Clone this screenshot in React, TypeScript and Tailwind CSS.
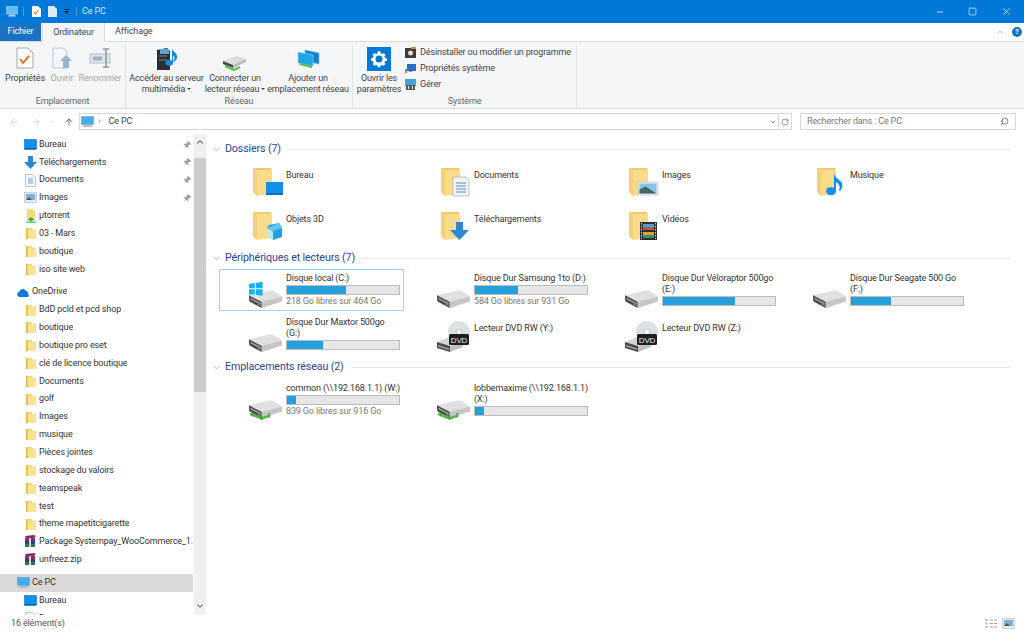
import { ReactNode } from "react";
import { ChevronDown, ChevronUp, ArrowLeft, ArrowRight, ArrowUp, Search, RotateCw, Minus, Square, X, Pin } from "lucide-react";

function SmallFolder() {
  return (
    <svg width="12" height="13" viewBox="0 0 12 13" className="shrink-0">
      <path d="M1 1h6v1.500h4V12H1z" fill="#f5d67b" />
      <path d="M1 1h1.600v11H1z" fill="#e6b94f" />
      <path d="M3 3h8v9H3z" fill="#fbe38f" />
    </svg>
  );
}

function Desktop() {
  return (
    <svg width="13" height="11" viewBox="0 0 13 11" className="shrink-0">
      <rect x="0.500" y="0.500" width="12" height="10" fill="#0f8fee" stroke="#0b6fc0" strokeWidth="0.6" />
      <rect x="1" y="9" width="11" height="1" fill="#0b5fa8" />
    </svg>
  );
}

function DownArrow() {
  return (
    <svg width="13" height="13" viewBox="0 0 13 13" className="shrink-0">
      <path d="M4 0h5v6h4l-6.500 7L0 6h4z" fill="#2b88d8" />
    </svg>
  );
}

function DocSmall() {
  return (
    <svg width="11" height="13" viewBox="0 0 11 13" className="shrink-0">
      <path d="M.5.5h7l3 3v9H.5z" fill="#f3f6f9" stroke="#a4adb5" strokeWidth="0.7" />
      <path d="M3 5h5M3 7h5M3 9h5" stroke="#4a90c8" strokeWidth="0.8" />
    </svg>
  );
}

function PicSmall() {
  return (
    <svg width="13" height="11" viewBox="0 0 13 11" className="shrink-0">
      <rect x="0.500" y="0.500" width="12" height="10" fill="#e9edf0" stroke="#aab2b9" strokeWidth="0.6" />
      <rect x="2" y="2" width="9" height="6" fill="#7fb0d8" />
      <path d="M2 8l3-3 3 3z" fill="#3c5a5e" />
    </svg>
  );
}

function Torrent() {
  return (
    <svg width="12" height="14" viewBox="0 0 12 14" className="shrink-0">
      <path d="M2 0h6v1.500h2V10H2z" fill="#f6d97f" />
      <path d="M6 8l4 3H7.500v1.500h-3V11H2z" fill="#4caf3a" />
      <rect x="1" y="12.500" width="10" height="1.200" fill="#59b548" />
    </svg>
  );
}

function Rar() {
  return (
    <svg width="13" height="13" viewBox="0 0 13 13" className="shrink-0">
      <path d="M1 1l9-1 2 1-2 2H2z" fill="#8e2a6c" />
      <rect x="1" y="3" width="10" height="3" fill="#8a2e68" />
      <rect x="1" y="6" width="10" height="3" fill="#2a3c8f" />
      <rect x="1" y="9" width="10" height="3" fill="#2c7d4a" />
      <path d="M5 3h2v9H5z" fill="#d8d2c2" />
    </svg>
  );
}

function OneDrive() {
  return (
    <svg width="13" height="9" viewBox="0 0 13 9" className="shrink-0">
      <path d="M2.500 9A2.500 2.500 0 0 1 2 4.100 3.700 3.700 0 0 1 8.500 2.500 2.900 2.900 0 0 1 11 6.200 1.500 1.500 0 0 1 11 9z" fill="#0f78d4" />
    </svg>
  );
}

function PcSmall() {
  return (
    <svg width="13" height="12" viewBox="0 0 13 12" className="shrink-0">
      <rect x="0.500" y="0.500" width="12" height="8" fill="#3fb0ee" stroke="#7f9fb4" strokeWidth="0.6" />
      <path d="M3 9h7l1.500 2h-10z" fill="#b6bec5" />
    </svg>
  );
}

function BigFolder({ children }: { children?: ReactNode }) {
  return (
    <svg width="30" height="30" viewBox="0 0 30 30" className="shrink-0">
      <path d="M0 1h18v26H3l-3-3z" fill="#f0c968" />
      <path d="M0 1l4 2h15v24L4 29 0 25z" fill="#f8dc8c" />
      <path d="M0 1l4 3v25l-4-4z" fill="#f4d077" />
      {children}
    </svg>
  );
}

function Drive({ children }: { children?: ReactNode }) {
  return (
    <svg width="33" height="18" viewBox="0 0 34 22" preserveAspectRatio="none" className="mt-[1px] shrink-0 overflow-visible">
      <path d="M0 6.500L21 .5Q23 0 25 1L34 8 13 14.500z" fill="#e0e0e0" />
      <path d="M13 14.500L34 8v6L13 22z" fill="#c6c6c6" />
      <path d="M0 6.500L13 14.500V22L1 14.500Q0 13 0 11z" fill="#4a4a4a" />
      <path d="M1.500 9.500L12 16v1.800L1.500 11.300z" fill="#a8a8a8" />
      <path d="M9 16.500l3 2v1.200l-3-2z" fill="#6fd08a" />
      {children}
    </svg>
  );
}

function NetDrive() {
  return (
    <Drive>
      <path d="M1 17l12 5.500 8-3" stroke="#58b947" strokeWidth="3" fill="none" />
      <path d="M4 15v5M13 19v5M21 16v5" stroke="#3e9c34" strokeWidth="1.500" />
    </Drive>
  );
}

function DvdDrive() {
  return (
    <svg width="34" height="32" viewBox="0 0 34 32" className="shrink-0">
      <path d="M0 21l12-5 10 4-9 5z" fill="#d4d4d4" />
      <path d="M0 21l13 4v6L0 27z" fill="#4a4a4a" />
      <path d="M13 25l13-4v5l-13 5z" fill="#c0c0c0" />
      <path d="M1 24l11 3.400V29L1 25.500z" fill="#a8a8a8" />
      <circle cx="22" cy="11" r="11" fill="#dbe2e4" />
      <circle cx="22" cy="11" r="3" fill="#f7f7f7" stroke="#a9b0b4" strokeWidth="0.6" />
      <rect x="12" y="13" width="20" height="11" fill="#1f1f1f" rx="1.500" />
      <text x="22" y="21.500" fontSize="8" fill="#e8e8e8" textAnchor="middle" fontFamily="Liberation Sans">DVD</text>
    </svg>
  );
}

const pinned = [
  { name: "Bureau", icon: <Desktop /> },
  { name: "Téléchargements", icon: <DownArrow /> },
  { name: "Documents", icon: <DocSmall /> },
  { name: "Images", icon: <PicSmall /> },
];

const quick = ["03 - Mars", "boutique", "iso site web"];
const oneDrive = [
  "BdD pcld et pcd shop",
  "boutique",
  "boutique pro eset",
  "clé de licence boutique",
  "Documents",
  "golf",
  "Images",
  "musique",
  "Pièces jointes",
  "stockage du valoirs",
  "teamspeak",
  "test",
  "theme mapetitcigarette",
];

function NavRow({ icon, name, pin, top, active }: { icon: ReactNode; name: string; pin?: boolean; top?: boolean; active?: boolean }) {
  return (
    <div className={`relative flex h-[17.85px] shrink-0 items-center gap-[2px] ${top ? "pl-[17px]" : "pl-[24px]"} ${active ? "bg-[#d9d9d9]" : ""}`}>
      <span className="flex w-[13px] justify-center">{icon}</span>
      <span className="whitespace-nowrap overflow-hidden">{name}</span>
      {pin && <Pin size={8} className="absolute right-[2px] top-[5px] rotate-45 fill-[#9a9a9a] text-[#9a9a9a]" />}
    </div>
  );
}

function Sidebar() {
  return (
    <div className="flex w-[206px] shrink-0">
      <div className="flex w-[193px] flex-col overflow-hidden pt-[1.500px] text-[#333]">
        {pinned.map((p) => (
          <NavRow key={p.name} icon={p.icon} name={p.name} pin />
        ))}
        <NavRow icon={<Torrent />} name="µtorrent" />
        {quick.map((q) => (
          <NavRow key={q} icon={<SmallFolder />} name={q} />
        ))}
        <div className="h-[5px] shrink-0" />
        <NavRow top icon={<OneDrive />} name="OneDrive" />
        {oneDrive.map((q, i) => (
          <NavRow key={i} icon={<SmallFolder />} name={q} />
        ))}
        <NavRow icon={<Rar />} name="Package Systempay_WooCommerce_1." />
        <NavRow icon={<Rar />} name="unfreez.zip" />
        <div className="h-[5px] shrink-0" />
        <NavRow top active icon={<PcSmall />} name="Ce PC" />
        <NavRow icon={<Desktop />} name="Bureau" />
        <NavRow icon={<DocSmall />} name="Documents" />
      </div>
      <div className="ml-[1px] flex w-[12px] flex-col bg-[#f0f0f0]">
        <div className="flex h-[24px] justify-center pt-[3px] text-[#555]">
          <ChevronUp size={10} strokeWidth={2.5} />
        </div>
        <div className="h-[234px] bg-[#cdcdcd]" />
        <div className="flex-1" />
        <div className="flex h-[14px] justify-center text-[#555]">
          <ChevronDown size={10} strokeWidth={2.5} />
        </div>
      </div>
    </div>
  );
}

function SectionHead({ title }: { title: string }) {
  return (
    <div className="flex h-[17px] items-center">
      <ChevronDown size={11} strokeWidth={1.2} className="ml-[5px] text-[#777]" />
      <span className="ml-[3px] whitespace-nowrap text-[10.700px] text-[#2d4593]">{title}</span>
      <div className="ml-[8px] mr-[14px] h-px flex-1 bg-[#e6e6e6]" />
    </div>
  );
}

function FolderItem({ name, children }: { name: string; children?: ReactNode }) {
  return (
    <div className="flex h-[39px] pl-[34px]">
      <BigFolder>{children}</BigFolder>
      <span className="ml-[3px] mt-[2px]">{name}</span>
    </div>
  );
}

function DriveItem({ icon, lines, pct, free, selected, offset }: { icon: ReactNode; lines: string[]; pct?: number; free?: string; selected?: boolean; offset?: boolean }) {
  return (
    <div className={`flex h-[42px] border pl-[29px] ${selected ? "border-[#99d1ff]" : "border-transparent"}`}>
      <div className={`flex w-[37px] shrink-0 ${pct === undefined ? "pt-[7px]" : "pt-[19px]"}`}>{icon}</div>
      <div className={`w-[114px] ${offset ? "pt-[9px]" : "pt-[3px]"}`}>
        {lines.map((l) => (
          <div key={l} className="h-[11px] whitespace-nowrap leading-[11px]">
            {l}
          </div>
        ))}
        {pct !== undefined && (
          <div className="mt-[1px] h-[10px] border border-[#bcbcbc] bg-[#e6e6e6]">
            <div className="h-full bg-[#26a0da]" style={{ width: `${pct}%` }} />
          </div>
        )}
        {free && <div className="h-[11px] whitespace-nowrap leading-[13px] text-[#777]">{free}</div>}
      </div>
    </div>
  );
}

function Main() {
  return (
    <div className="flex min-w-0 flex-1 flex-col pt-[7px] text-[#333]">
      <SectionHead title="Dossiers (7)" />
      <div className="ml-[13px] mt-[9px] grid grid-cols-[repeat(4,188px)] gap-y-[5px]">
        <FolderItem name="Bureau">
          <rect x="13" y="15" width="17" height="13" fill="#0f8fee" />
          <rect x="13" y="26" width="17" height="2" fill="#0b6fc0" />
        </FolderItem>
        <FolderItem name="Documents">
          <path d="M12 10h13l3 3v16H12z" fill="#f1f4f7" stroke="#9aa3ab" strokeWidth="0.6" />
          <path d="M15 16h10M15 19h10M15 22h10M15 25h10" stroke="#5c8fbd" strokeWidth="1" />
        </FolderItem>
        <FolderItem name="Images">
          <rect x="9" y="15" width="20" height="13" fill="#e9eef1" stroke="#b8c0c6" strokeWidth="0.6" />
          <rect x="10.500" y="16.500" width="17" height="10" fill="#8cc3e6" />
          <path d="M10.500 26.500v-4l6-3 11 7z" fill="#3f6a62" />
        </FolderItem>
        <FolderItem name="Musique">
          <path d="M17 6c0 4 6 7 8 10 1 3 0 6-2 8l-1-.5c1-2 1-5-1-7l-2-1.500V24a5 4 0 1 1-2-3z" fill="#0f8fee" />
        </FolderItem>
        <FolderItem name="Objets 3D">
          <path d="M16 14l10-2 3 5v9l-9 3-6-4V17z" fill="#1f9fe6" />
          <path d="M14 17l6 3v9l-6-4z" fill="#bfe8f5" />
          <path d="M14 17l12-5 3 5-9 3z" fill="#62c6ee" />
        </FolderItem>
        <FolderItem name="Téléchargements">
          <path d="M15 11h7v8h6l-9.500 10L9 19h6z" fill="#2b88d8" />
        </FolderItem>
        <FolderItem name="Vidéos">
          <rect x="11" y="11" width="17" height="18" fill="#263238" />
          <rect x="14" y="13" width="11" height="3" fill="#48a3d8" />
          <rect x="14" y="16" width="11" height="3" fill="#c9503c" />
          <rect x="14" y="21" width="11" height="3" fill="#e4a13b" />
          <rect x="14" y="24" width="11" height="3" fill="#3f8f5a" />
          <path d="M12.500 12v16M26.500 12v16" stroke="#d8d8d8" strokeWidth="1" strokeDasharray="1.500 1.500" />
        </FolderItem>
      </div>
      <SectionHead title="Périphériques et lecteurs (7)" />
      <div className="ml-[13px] mt-[2px] grid grid-cols-[repeat(4,185px)] gap-x-[3px] gap-y-[2px]">
        <DriveItem
          selected
          lines={["Disque local (C:)"]}
          pct={53}
          free="218 Go libres sur 464 Go"
          icon={
            <Drive>
              <path d="M0-7.500l6-1v6.500H0zM7-8.700l7-1.300v8H7zM0-1h6v6.500H0zM7-1h7v8L7 5.700z" fill="#11b4ee" />
            </Drive>
          }
        />
        <DriveItem lines={["Disque Dur Samsung 1to (D:)"]} pct={38} free="584 Go libres sur 931 Go" icon={<Drive />} />
        <DriveItem lines={["Disque Dur Véloraptor 500go", "(E:)"]} pct={64} icon={<Drive />} />
        <DriveItem lines={["Disque Dur Seagate 500 Go", "(F:)"]} pct={36} icon={<Drive />} />
        <DriveItem lines={["Disque Dur Maxtor 500go", "(G:)"]} pct={32} icon={<Drive />} />
        <DriveItem offset lines={["Lecteur DVD RW (Y:)"]} icon={<DvdDrive />} />
        <DriveItem offset lines={["Lecteur DVD RW (Z:)"]} icon={<DvdDrive />} />
      </div>
      <div className="mt-[4px]">
        <SectionHead title="Emplacements réseau (2)" />
      </div>
      <div className="ml-[13px] mt-[3px] grid grid-cols-[repeat(4,185px)] gap-x-[3px]">
        <DriveItem lines={["common (\\\\192.168.1.1) (W:)"]} pct={8} free="839 Go libres sur 916 Go" icon={<NetDrive />} />
        <DriveItem lines={["lobbemaxime (\\\\192.168.1.1)", "(X:)"]} pct={8} icon={<NetDrive />} />
      </div>
    </div>
  );
}

function RibbonButton({ w, icon, lines, dim, caret }: { w: string; icon: ReactNode; lines: string[]; dim?: boolean; caret?: boolean }) {
  return (
    <div className={`flex shrink-0 flex-col items-center ${w} ${dim ? "text-[#a8a8a8]" : "text-[#444]"}`}>
      <div className="flex h-[26px] items-end">{icon}</div>
      <div className="mt-[2px] text-center leading-[10.500px] whitespace-nowrap">
        {lines.map((l, i) => (
          <div key={l}>
            {l}
            {caret && i === lines.length - 1 && <span className="ml-[2px] inline-block border-x-[2px] border-t-[2px] border-x-transparent border-t-[#444] align-middle" />}
          </div>
        ))}
      </div>
    </div>
  );
}

function RibbonGroup({ w, label, children }: { w: string; label: string; children: ReactNode }) {
  return (
    <div className={`flex shrink-0 flex-col border-r border-[#e2e3e4] ${w}`}>
      <div className="flex h-[50px] shrink-0">{children}</div>
      <div className="h-[13px] text-center leading-[13px] text-[#666]">{label}</div>
    </div>
  );
}

function Ribbon() {
  return (
    <div className="flex h-[68px] shrink-0 border-y border-[#dadbdc] bg-[#f5f6f7] pt-[3px]">
      <RibbonGroup w="w-[126px]" label="Emplacement">
        <RibbonButton
          w="w-[50px]"
          lines={["Propriétés"]}
          icon={
            <svg width="18" height="22" viewBox="0 0 18 22" className="mb-[2px]">
              <path d="M1 1h11l5 5v15H1z" fill="#fdfdfd" stroke="#a5a5a5" />
              <path d="M4 12l3 4 6-7" stroke="#e8752a" strokeWidth="2" fill="none" />
            </svg>
          }
        />
        <RibbonButton
          dim
          w="w-[24px]"
          lines={["Ouvrir"]}
          icon={
            <svg width="21" height="22" viewBox="0 0 21 22" className="mb-[2px]">
              <path d="M1 1h10l4 4v16H1z" fill="#f4f7fb" stroke="#b7c5d8" />
              <path d="M14 8l6 6h-3v7h-6v-7H8z" fill="#9bb2cc" />
            </svg>
          }
        />
        <RibbonButton
          dim
          w="w-[52px]"
          lines={["Renommer"]}
          icon={
            <svg width="22" height="20" viewBox="0 0 22 20" className="mb-[3px]">
              <rect x="1" y="6" width="20" height="9" fill="#dfe4ea" stroke="#b4bec9" />
              <rect x="4" y="8.500" width="9" height="4" fill="#9fb2c7" />
              <path d="M14 1h6M14 19h6M17 1v18" stroke="#8c97a3" strokeWidth="1.500" />
            </svg>
          }
        />
      </RibbonGroup>
      <RibbonGroup w="w-[227px]" label="Réseau">
        <RibbonButton
          w="w-[81px]"
          caret
          lines={["Accéder au serveur", "multimédia"]}
          icon={
            <svg width="24" height="24" viewBox="0 0 24 24">
              <path d="M2 3l10-2 3 3v19H2z" fill="#2e2e2e" />
              <rect x="4" y="8" width="8" height="2" fill="#5a5a5a" />
              <rect x="4" y="12" width="8" height="2" fill="#5a5a5a" />
              <rect x="5" y="2" width="9" height="5" fill="#5ea6d6" />
              <path d="M17 2c1 3 6 4 5 9-.5 2-2 3-3 4l-1-.5c1-1 2-3 1-5l-1-1v8a4 3 0 1 1-1-2.800z" fill="#1489e0" />
            </svg>
          }
        />
        <RibbonButton
          w="w-[56px]"
          caret
          lines={["Connecter un", "lecteur réseau"]}
          icon={
            <svg width="24" height="17" viewBox="0 0 24 17">
              <path d="M0 7l14-5 9 3-13 6z" fill="#dcdcdc" />
              <path d="M0 7l10 4v3L0 10z" fill="#4b4b4b" />
              <path d="M10 11l13-6v3l-13 6z" fill="#b9b9b9" />
              <path d="M2 12l9 4 6-3" stroke="#58b947" strokeWidth="2" fill="none" />
            </svg>
          }
        />
        <RibbonButton
          w="w-[90px]"
          lines={["Ajouter un", "emplacement réseau"]}
          icon={
            <svg width="23" height="20" viewBox="0 0 23 20" className="mb-[2px]">
              <path d="M8 1l14 3v11L8 12z" fill="#0f84cf" stroke="#7fb7d8" strokeWidth="0.6" />
              <path d="M1 3l15 3v11L1 14z" fill="#19a5e6" stroke="#9fd3ea" strokeWidth="0.6" />
              <path d="M3 15l12 3" stroke="#58b947" strokeWidth="2" />
            </svg>
          }
        />
      </RibbonGroup>
      <RibbonGroup w="w-[224px]" label="Système">
        <div className="flex">
          <RibbonButton
            w="w-[52px]"
            lines={["Ouvrir les", "paramètres"]}
            icon={
              <svg width="24" height="24" viewBox="0 0 24 24">
                <rect width="24" height="24" fill="#0078d7" />
                <path d="M10.500 4h3l.5 2.300 1.500.7 2-1.200 2.100 2.100L18.400 10l.6 1.500 2.300.5v3l-2.300.5-.6 1.500 1.200 2-2.100 2.100-2-1.200-1.500.6-.5 2.300h-3l-.5-2.300-1.500-.6-2 1.200-2.100-2.100L5.600 17l-.6-1.500-2.300-.5v-3l2.300-.5.600-1.500-1.200-2 2.100-2.100 2 1.200 1.500-.7z" fill="#fff" transform="translate(12 12) scale(.85) translate(-12 -13)" />
                <circle cx="12" cy="12" r="3.500" fill="#0078d7" />
              </svg>
            }
          />
          <div className="flex flex-col gap-[5px] pt-[2px] text-[#444]">
            <div className="flex h-[11px] items-center gap-[4px] whitespace-nowrap">
              <svg width="11" height="11" viewBox="0 0 11 11">
                <rect y="1" width="11" height="10" fill="#3b3b3b" />
                <circle cx="5.500" cy="6" r="2.500" fill="#dcdcdc" />
                <rect x="6" width="5" height="2" fill="#d08c3e" />
              </svg>
              Désinstaller ou modifier un programme
            </div>
            <div className="flex h-[11px] items-center gap-[4px] whitespace-nowrap">
              <svg width="11" height="11" viewBox="0 0 11 11">
                <rect x="2" y="1" width="9" height="7" fill="#2b6fc0" />
                <path d="M0 6h2v4H0zM4 8h3v1H4z" fill="#8a8a8a" />
              </svg>
              Propriétés système
            </div>
            <div className="flex h-[11px] items-center gap-[4px] whitespace-nowrap">
              <svg width="11" height="11" viewBox="0 0 11 11">
                <rect y="0" width="11" height="7" fill="#3fa3df" />
                <rect x="1" y="6" width="9" height="5" fill="#5a5a5a" />
                <path d="M3 7h1v3H3zM7 7h1v3H7z" fill="#e8e8e8" />
              </svg>
              Gérer
            </div>
          </div>
        </div>
      </RibbonGroup>
    </div>
  );
}

export default function App() {
  return (
    <div className="flex h-screen w-[1024px] flex-col overflow-hidden bg-white font-['Roboto',sans-serif] text-[9px] tracking-[-0.14px]">
      {/* title bar */}
      <div className="flex h-[23px] shrink-0 items-center bg-[#0078d7] pl-[6px] text-white">
        <svg width="12" height="11" viewBox="0 0 12 11">
          <rect x="0.500" y="0.500" width="11" height="7.500" fill="#5cc2f2" stroke="#a9cfe6" strokeWidth="0.6" />
          <path d="M3 8.500h6L10 10.500H2z" fill="#b8cfe0" />
        </svg>
        <div className="ml-[5px] h-[9px] w-px bg-[#4aa0e3]" />
        <svg width="9" height="11" viewBox="0 0 9 11" className="ml-[8px]">
          <path d="M0 0h6l3 3v8H0z" fill="#fff" />
          <path d="M2 6l1.500 2 3-4" stroke="#e8752a" strokeWidth="1.200" fill="none" />
        </svg>
        <svg width="9" height="11" viewBox="0 0 9 11" className="ml-[7px]">
          <path d="M0 0h6l3 3v8H0z" fill="#dce9f6" />
        </svg>
        <svg width="5" height="5" viewBox="0 0 5 5" className="ml-[7px]">
          <path d="M0 0h5v1H0zM0 2h5L2.500 5z" fill="#1a2a3a" />
        </svg>
        <div className="ml-[7px] h-[9px] w-px bg-[#4aa0e3]" />
        <span className="ml-[5px] text-[#d6e9f8]">Ce PC</span>
        <div className="flex-1" />
        <Minus size={10} className="mr-[23px] text-[#cfe6f8]" />
        <Square size={9} className="mr-[24px] text-[#cfe6f8]" />
        <X size={11} className="mr-[12px] text-[#cfe6f8]" />
      </div>
      {/* tabs */}
      <div className="relative flex h-[18px] shrink-0 items-center bg-white text-[#444]">
        <div className="flex h-full w-[41px] items-center justify-center bg-[#1a72c4] text-white">Fichier</div>
        <div className="relative z-10 mb-[-1px] ml-px flex h-[19px] w-[63px] items-center justify-center border-x border-[#dadbdc] bg-[#f5f6f7]">Ordinateur</div>
        <div className="ml-[10px]">Affichage</div>
        <div className="flex-1" />
        <ChevronUp size={10} className="mr-[7px] text-[#aaa]" />
        <div className="mr-[2px] flex h-[10px] w-[10px] items-center justify-center rounded-full bg-[#1a72c4] text-[7px] font-bold text-white">?</div>
      </div>
      <Ribbon />
      {/* address row */}
      <div className="flex h-[25px] shrink-0 items-center text-[#444]">
        <ArrowLeft size={10} className="ml-[9px] text-[#ccc]" />
        <ArrowRight size={10} className="ml-[12px] text-[#ccc]" />
        <ChevronDown size={7} className="ml-[8px] text-[#ccc]" />
        <ArrowUp size={10} className="ml-[8px] text-[#555]" />
        <div className="ml-[5px] flex h-[17px] w-[713px] items-center border border-[#d9d9d9]">
          <span className="ml-[1px]">
            <PcSmall />
          </span>
          <span className="ml-[4px] text-[#777]">›</span>
          <span className="ml-[8px]">Ce PC</span>
          <div className="flex-1" />
          <ChevronDown size={8} className="mr-[1px] text-[#555]" />
          <div className="flex h-full w-[13px] items-center justify-center border-l border-[#d9d9d9]">
            <RotateCw size={8} className="text-[#666]" />
          </div>
        </div>
        <div className="ml-[8px] flex h-[17px] w-[216px] items-center border border-[#d9d9d9] pl-[6px] text-[#777]">
          Rechercher dans : Ce PC
          <div className="flex-1" />
          <Search size={9} className="mr-[6px] -scale-x-100 text-[#555]" />
        </div>
      </div>
      <div className="flex min-h-0 flex-1">
        <Sidebar />
        <Main />
      </div>
      {/* status bar */}
      <div className="flex h-[17px] shrink-0 items-center pl-[11px] text-[#555]">
        16 élément(s)
        <div className="flex-1" />
        <svg width="13" height="11" viewBox="0 0 13 11" className="mr-[4px]">
          <path d="M0 1h3v2H0zM0 4.500h3v2H0zM0 8h3v2H0z" fill="#c8c8c8" />
          <path d="M5 2h3M9 2h3M5 5.500h3M9 5.500h3M5 9h3M9 9h3" stroke="#a0a0a0" />
        </svg>
        <span className="mr-[9px]">
          <PicSmall />
        </span>
      </div>
    </div>
  );
}
